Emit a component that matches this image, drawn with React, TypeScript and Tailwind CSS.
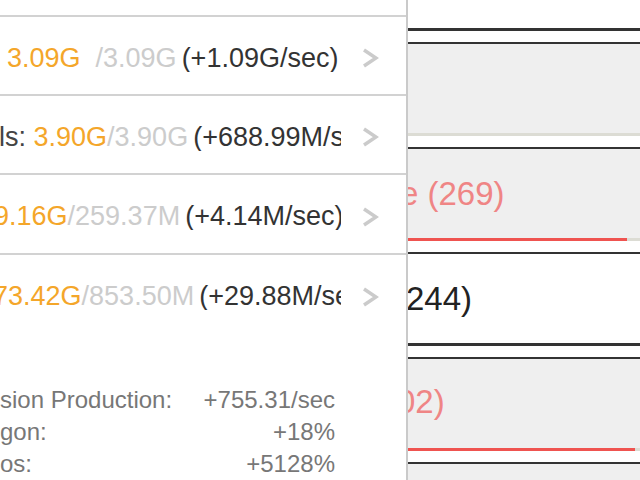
import React from 'react';

type Row = {
    lead?: string;
    leadOffset: string;
    amount: string;
    gap: string;
    cap: string;
    rate: string;
};

const rows: Row[] = [
    { leadOffset: 'ml-[7px]', amount: '3.09G', gap: 'ml-[15px]', cap: '/3.09G', rate: '(+1.09G/sec)' },
    { lead: 'ls: ', leadOffset: 'ml-[-1px]', amount: '3.90G', gap: 'ml-0', cap: '/3.90G', rate: '(+688.99M/sec)' },
    { leadOffset: 'ml-[-6px]', amount: '9.16G', gap: 'ml-0', cap: '/259.37M', rate: '(+4.14M/sec)' },
    { leadOffset: 'ml-[-7px]', amount: '73.42G', gap: 'ml-0', cap: '/853.50M', rate: '(+29.88M/sec)' },
];

const stats = [
    { label: 'sion Production:', value: '+755.31/sec' },
    { label: 'gon:', value: '+18%' },
    { label: 'os:', value: '+5128%' },
];

type Unit = {
    text: string;
    textClass: string;
    offset: string;
    bg: string;
    fill: number;
    dark: boolean;
};

const units: Unit[] = [
    { text: '(145)', textClass: 'text-[#222] mt-[-5px]', offset: 'ml-[35px]', bg: 'bg-white', fill: 0, dark: true },
    { text: '', textClass: '', offset: '', bg: 'bg-[#efefef]', fill: 0, dark: false },
    { text: 'e (269)', textClass: 'text-[#ef8585]', offset: 'ml-[-8px]', bg: 'bg-[#efefef]', fill: 219, dark: false },
    { text: '(244)', textClass: 'text-[#222]', offset: 'ml-[-13px]', bg: 'bg-white', fill: 0, dark: true },
    { text: '02)', textClass: 'text-[#ef8585] mt-[-4px]', offset: 'ml-[-11px]', bg: 'bg-[#efefef]', fill: 227, dark: false },
    { text: '', textClass: '', offset: '', bg: 'bg-[#efefef]', fill: 0, dark: false },
];

const Chevron = () => (
    <svg width="18" height="22" viewBox="0 0 18 22" className="ml-[20px] mt-[5px] shrink-0">
        <polyline points="3,3 15,11 3,19" fill="none" stroke="#cbcbcb" strokeWidth="3.5" />
    </svg>
);

export default function App() {
    return (
        <div className="flex w-[640px] h-[480px] overflow-hidden bg-white font-['Liberation_Sans',Arial,sans-serif]">
            <div className="w-[408px] shrink-0 border-r-2 border-[#cacaca] flex flex-col">
                <div className="h-[17px] border-b-2 border-[#d2d2d2]" />
                {rows.map((row, i) => (
                    <div
                        key={i}
                        className={`h-[80px] flex items-center ${i < rows.length - 1 ? 'border-b-2 border-[#d2d2d2]' : ''}`}
                    >
                        <div className="w-[341px] mt-[5px] shrink-0 overflow-hidden whitespace-nowrap text-[27px] leading-none">
                            <span className={`${row.leadOffset} inline-block`}>
                                {row.lead && <span className="text-[#444]">{row.lead}</span>}
                                <span className="text-[#f4a62a]">{row.amount}</span>
                                <span className={`${row.gap} inline-block text-[#cccccc]`}>{row.cap}</span>
                                <span className="ml-[5px] inline-block text-[#333]">{row.rate}</span>
                            </span>
                        </div>
                        <Chevron />
                    </div>
                ))}
                <div className="mt-[50px] w-[335px] text-[24px] leading-[32px] text-[#777]">
                    {stats.map((s) => (
                        <div key={s.label} className="flex justify-between whitespace-nowrap">
                            <span>{s.label}</span>
                            <span>{s.value}</span>
                        </div>
                    ))}
                </div>
            </div>
            <div className="flex-1 overflow-hidden">
                <div className="mt-[-63px] flex flex-col">
                    {units.map((u, i) => (
                        <div key={i} className="mb-[11px]">
                            <div className={`h-[91px] border-t-2 border-[#333] ${u.bg} flex items-center overflow-hidden`}>
                                {u.text && (
                                    <span className={`${u.offset} whitespace-nowrap text-[33px] leading-[33px] ${u.textClass}`}>
                                        {u.text}
                                    </span>
                                )}
                            </div>
                            <div className={`h-[3px] ${u.dark ? 'bg-[#333]' : 'bg-[#dcdcd4]'} flex`}>
                                {u.fill > 0 && <div className="h-full bg-[#ef5350]" style={{ width: u.fill }} />}
                            </div>
                        </div>
                    ))}
                </div>
            </div>
        </div>
    );
}
